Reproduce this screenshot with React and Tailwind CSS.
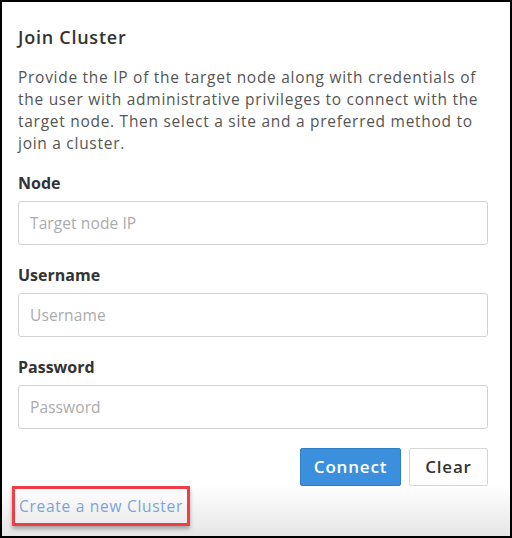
import React from 'react'

const FIELDS = [
  { label: 'Node', placeholder: 'Target node IP' },
  { label: 'Username', placeholder: 'Username' },
  { label: 'Password', placeholder: 'Password', type: 'password' },
]

export default function App() {
  return (
    <div
      className="w-[512px] h-[538px] border-2 border-black bg-white flex flex-col text-[#333]"
      style={{ fontFamily: '"Open Sans", "Liberation Sans", sans-serif' }}
    >
      <div className="flex-1 pl-4 pr-[22px] pt-[23px]">
        <h2 className="text-[18px] leading-6 font-semibold tracking-[0.75px] text-[#333]">Join Cluster</h2>
        <p className="mt-[17px] text-[15.5px] leading-[22px] tracking-[0.72px] text-[#555]">
          Provide the IP of the target node along with credentials of the user with administrative privileges to connect with the target node. Then select a site and a preferred method to join a cluster.
        </p>

        {FIELDS.map(({ label, placeholder, type }, i) => (
          <div key={label} className={i === 0 ? 'mt-[19px]' : 'mt-5'}>
            <label className="block text-[16px] leading-5 font-bold text-[#333]">{label}</label>
            <input
              type={type || 'text'}
              placeholder={placeholder}
              className="mt-2 w-full h-[44px] px-[11px] rounded-[3px] border-[1.5px] border-[#d2d2d2] text-[15.5px] tracking-[0.1px] placeholder:text-[#ababab] outline-none"
            />
          </div>
        ))}

        <div className="mt-[19px] flex justify-end gap-2">
          <button className="w-[101px] h-[38px] bg-[#3b8fdc] border border-[#2f7fc8] text-white text-[17px] font-semibold tracking-[0.8px] rounded-[2px]">
            Connect
          </button>
          <button className="w-[79px] h-[38px] bg-white border border-[#d6d6d6] text-[#333] text-[17px] font-semibold tracking-[0.8px] rounded-[2px]">
            Clear
          </button>
        </div>
      </div>

      <div className="h-[50px] bg-gradient-to-b from-white to-[#e6e6e6] pl-[10px]">
        <div className="inline-block border-[3px] border-[#ef3e45] shadow-[0_3px_4px_rgba(0,0,0,0.3)] pl-[4px] pr-[4px] py-[7px]">
          <a href="#" className="block text-[15.5px] leading-5 tracking-[0.72px] text-[#7ba5d9]">Create a new Cluster</a>
        </div>
      </div>
    </div>
  )
}
